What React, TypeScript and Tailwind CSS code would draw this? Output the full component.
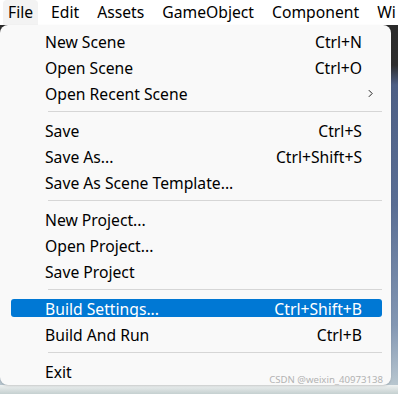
type Item = { label: string; shortcut?: string; submenu?: boolean; active?: boolean } | 'sep';

const items: Item[] = [
  { label: 'New Scene', shortcut: 'Ctrl+N' },
  { label: 'Open Scene', shortcut: 'Ctrl+O' },
  { label: 'Open Recent Scene', submenu: true },
  'sep',
  { label: 'Save', shortcut: 'Ctrl+S' },
  { label: 'Save As...', shortcut: 'Ctrl+Shift+S' },
  { label: 'Save As Scene Template...' },
  'sep',
  { label: 'New Project...' },
  { label: 'Open Project...' },
  { label: 'Save Project' },
  'sep',
  { label: 'Build Settings...', shortcut: 'Ctrl+Shift+B', active: true },
  { label: 'Build And Run', shortcut: 'Ctrl+B' },
  'sep',
  { label: 'Exit' },
];

const menus = ['File', 'Edit', 'Assets', 'GameObject', 'Component', 'Wi'];

export default function App() {
  return (
    <div
      className="relative w-[398px] h-[394px] overflow-hidden bg-white text-black"
      style={{ fontFamily: '"Noto Sans", "Open Sans", sans-serif' }}
    >
      <div className="flex h-[25px] items-stretch gap-[2px] pl-[3px] bg-white text-[15.7px] whitespace-nowrap">
        {menus.map((m) => (
          <div
            key={m}
            className={`flex items-center px-[5px] mr-[6px] rounded-t-[4px] ${m === 'File' ? 'bg-[#f3f3f3]' : ''}`}
          >
            {m}
          </div>
        ))}
      </div>

      <div className="flex h-[360px] bg-[linear-gradient(180deg,#2a2a2a_0px,#2e2e2e_40px,#4d5f85_60px,#5a6e94_180px,#8397b3_300px,#b8c6cf_360px)]">
        <div className="w-[391px] shrink-0 rounded-[8px] bg-[#f9f9f9] pt-[3px] pl-[11px] pr-[9px] shadow-[0_1px_2px_rgba(0,0,0,0.15)]">
          {items.map((it, i) =>
            it === 'sep' ? (
              <div key={i} className="h-[11px] flex items-center pl-[37px]">
                <div className="h-px w-full bg-[#d6d6d6]" />
              </div>
            ) : (
              <div key={i} className="h-[26px] flex items-center">
                <div
                  className={`flex h-[18px] w-full items-center justify-between rounded-[3px] pt-[3px] pl-[34px] pr-[20px] text-[15.7px] leading-none ${
                    it.active ? 'bg-[#0078d4] text-white' : ''
                  }`}
                >
                  <span>{it.label}</span>
                  {it.shortcut && <span>{it.shortcut}</span>}
                  {it.submenu && (
                    <svg viewBox="0 0 6 10" className="w-[5px] h-[9px] -mr-[11px] -mt-[2px]" fill="none" stroke="#222" strokeWidth="1.2">
                      <path d="M1 1 L5 5 L1 9" />
                    </svg>
                  )}
                </div>
              </div>
            )
          )}
        </div>
        <div className="flex-1" />
      </div>

      <div className="h-[9px] bg-[linear-gradient(180deg,#eef1f1,#c5d0d0)]" />

      <div className="absolute right-[15px] bottom-[7px] text-[9.6px] text-[#b3b3b3]">
        CSDN @weixin_40973138
      </div>
    </div>
  );
}
